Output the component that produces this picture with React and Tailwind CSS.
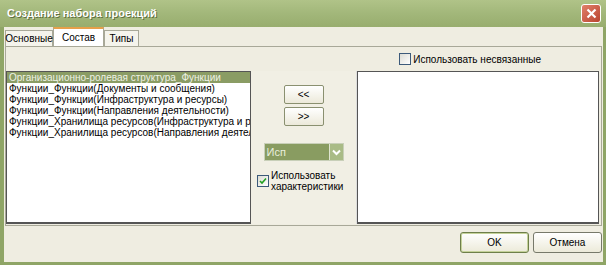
const items = [
  "Организационно-ролевая структура_Функции",
  "Функции_Функции(Документы и сообщения)",
  "Функции_Функции(Инфраструктура и ресурсы)",
  "Функции_Функции(Направления деятельности)",
  "Функции_Хранилища ресурсов(Инфраструктура и ресурсы)",
  "Функции_Хранилища ресурсов(Направления деятельности)",
]

const Check = ({ checked }) => (
  <span className="w-[12px] h-[12px] border border-[#3c5a7a] bg-gradient-to-br from-[#dcdcd4] to-white flex items-center justify-center shrink-0">
    {checked && (
      <svg width="8" height="8" viewBox="0 0 8 8">
        <path d="M1 4 L3 6 L7 1.5" stroke="#21a121" strokeWidth="1.6" fill="none" />
      </svg>
    )}
  </span>
)

const App = () => {
  return (
    <div
      className="w-[606px] h-[265px] flex flex-col bg-[#8fa566] overflow-hidden text-black"
      style={{ fontFamily: '"Liberation Sans", Arial, sans-serif' }}
    >
      {/* title bar */}
      <div className="h-[27px] shrink-0 flex items-center justify-between pl-[7px] pr-[5px] bg-gradient-to-b from-[#b0c388] via-[#a2b77a] to-[#98ad6e]">
        <span className="text-white font-bold text-[11px] [text-shadow:1px_1px_0_#5f7040]">
          Создание набора проекций
        </span>
        <div className="w-[20px] h-[19px] rounded-[3px] border border-white bg-gradient-to-br from-[#e1806a] to-[#b9432f] flex items-center justify-center">
          <svg width="11" height="11" viewBox="0 0 11 11">
            <path d="M1.5 1.5 L9.5 9.5 M9.5 1.5 L1.5 9.5" stroke="white" strokeWidth="2.2" />
          </svg>
        </div>
      </div>

      {/* body */}
      <div className="flex-1 flex flex-col bg-[#efede1] ml-[4px] mr-[3px] mb-[3px] px-[1px]">
        {/* tabs */}
        <div className="h-[18px] flex items-end mt-[1px] text-[10px]">
          <div className="h-[16px] w-[48px] border border-b-0 border-[#a8a898] bg-[#f5f4ec] flex items-center justify-center">Основные</div>
          <div className="h-[19px] w-[51px] border border-b-0 border-[#a8a898] border-t-[2px] border-t-[#e6a04a] bg-white flex items-center justify-center">Состав</div>
          <div className="h-[16px] w-[35px] border border-b-0 border-[#a8a898] bg-[#f5f4ec] flex items-center justify-center">Типы</div>
        </div>

        {/* panel */}
        <div className="h-[180px] border border-[#a8a898] bg-[#efede1] flex flex-col">
          <div className="h-[24px] flex items-center justify-end pr-[60px] gap-[2px] text-[10px]">
            <Check />
            <span>Использовать несвязанные</span>
          </div>
          <div className="flex h-[153px]">
            <div className="w-[245px] border border-[#555] border-b-[2px] bg-white text-[10px] leading-[11px] overflow-hidden whitespace-nowrap">
              {items.map((t, i) => (
                <div key={t} className={i === 0 ? "bg-[#8a9c64] text-[#eef2e4] pl-[2px]" : "pl-[2px]"}>
                  {t}
                </div>
              ))}
            </div>
            <div className="w-[106px] flex flex-col items-center bg-[#f1efe4] border-r border-[#ddd]">
              <div className="mt-[14px] flex flex-col gap-[3px] items-center">
                <div className="w-[40px] h-[19px] border border-[#8a9070] rounded-[2px] bg-gradient-to-b from-white to-[#ece9da] text-[10px] flex items-center justify-center">&lt;&lt;</div>
                <div className="w-[40px] h-[19px] border border-[#8a9070] rounded-[2px] bg-gradient-to-b from-white to-[#ece9da] text-[10px] flex items-center justify-center">&gt;&gt;</div>
              </div>
              <div className="mt-[17px] w-[80px] h-[18px] flex bg-[#899c61] border border-[#c8cfb8]">
                <span className="flex-1 text-[11px] text-[#e8eedc] pl-[2px] leading-[16px]">Исп</span>
                <span className="w-[14px] bg-[#a9bb86] border-l border-[#dfe5d0] flex items-center justify-center">
                  <svg width="9" height="7" viewBox="0 0 9 7">
                    <path d="M1 1.5 L4.5 5 L8 1.5" stroke="white" strokeWidth="2" fill="none" />
                  </svg>
                </span>
              </div>
              <div className="mt-[9px] self-start ml-[6px] flex items-center gap-[2px] text-[10px] leading-[11px]">
                <Check checked />
                <span>Использовать<br />характеристики</span>
              </div>
            </div>
            <div className="w-[242px] border border-[#555] border-b-[2px] bg-white"></div>
          </div>
        </div>

        {/* buttons */}
        <div className="flex-1 flex justify-end items-start pt-[6px] gap-[4px] text-[10px]">
          <div className="w-[69px] h-[21px] border border-[#6e7f4a] rounded-[3px] bg-gradient-to-b from-white to-[#ecead9] shadow-[inset_0_0_0_1px_#c5d29a] flex items-center justify-center">OK</div>
          <div className="w-[69px] h-[21px] border border-[#77796a] rounded-[3px] bg-gradient-to-b from-white to-[#ecead9] flex items-center justify-center">Отмена</div>
        </div>
      </div>
    </div>
  )
}

export default App
